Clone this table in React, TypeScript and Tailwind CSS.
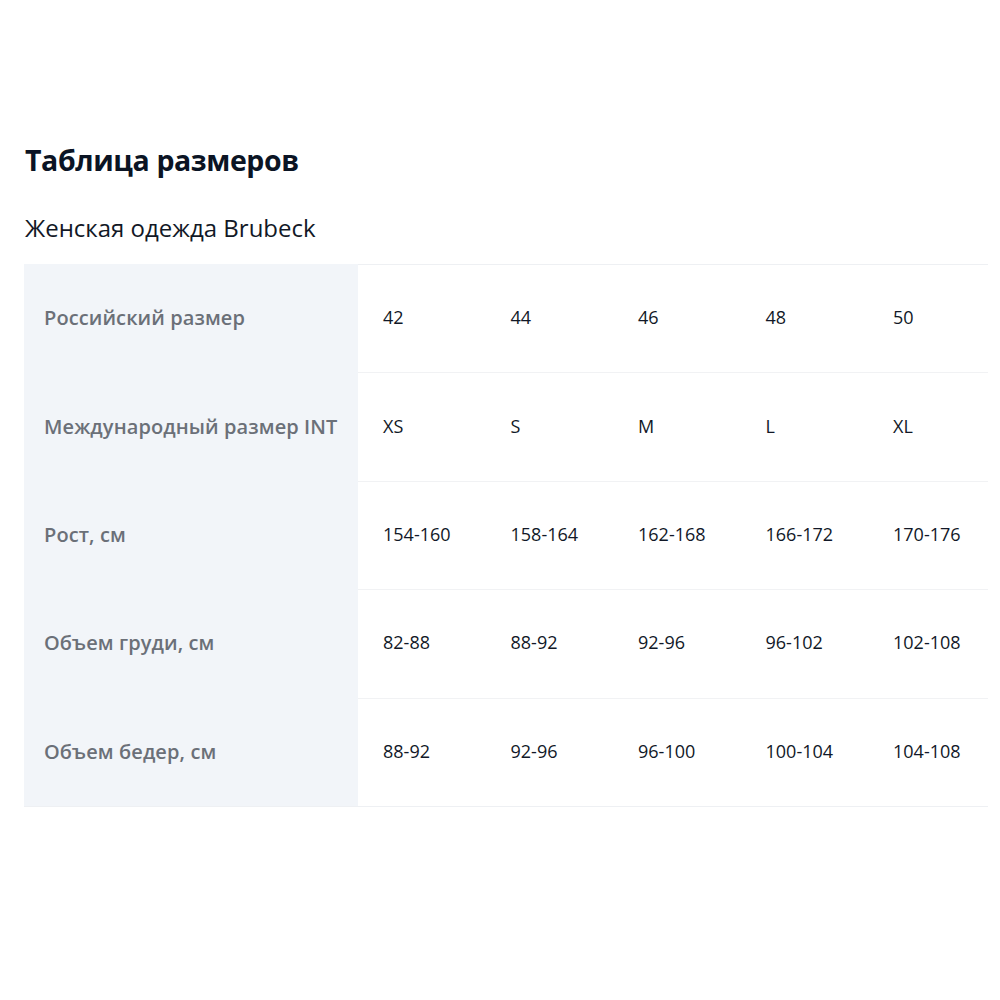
import React from 'react';

const rows = [
  { label: 'Российский размер', values: ['42', '44', '46', '48', '50'] },
  { label: 'Международный размер INT', values: ['XS', 'S', 'M', 'L', 'XL'] },
  { label: 'Рост, см', values: ['154-160', '158-164', '162-168', '166-172', '170-176'] },
  { label: 'Объем груди, см', values: ['82-88', '88-92', '92-96', '96-102', '102-108'] },
  { label: 'Объем бедер, см', values: ['88-92', '92-96', '96-100', '100-104', '104-108'] },
];

export default function App() {
  return (
    <div
      className="min-h-screen bg-white pl-[24px] pr-[12px] pt-[140px] text-[#0d1321]"
      style={{ fontFamily: '"Open Sans", "Noto Sans", sans-serif' }}
    >
      <h1 className="ml-[1px] text-[28.5px] font-bold leading-[40px] tracking-[-0.4px] text-[#0b1424]">Таблица размеров</h1>
      <p className="ml-[1px] mt-[33px] text-[24px] leading-[30px] text-[#121826]">Женская одежда Brubeck</p>

      <div className="mt-[21px] flex flex-col border-b border-[#eef0f3]">
        {rows.map((row, i) => (
          <div key={row.label} className="flex h-[108.4px]">
            <div className="flex w-[334px] items-center bg-[#f2f5f9] pl-[20px]">
              <span className="text-[20px] font-semibold tracking-[0.1px] text-[#6b7078]">{row.label}</span>
            </div>
            <div
              className={`grid flex-1 grid-cols-[127.5px_127.5px_127.5px_127.5px_1fr] items-center ${
                i === 0 ? 'border-t border-[#eef0f3]' : 'border-t border-[#f1f2f4]'
              }`}
            >
              {row.values.map((v) => (
                <span key={v} className="pl-[25px] pb-[2px] text-[18px] text-[#111827]">
                  {v}
                </span>
              ))}
            </div>
          </div>
        ))}
      </div>
    </div>
  );
}
